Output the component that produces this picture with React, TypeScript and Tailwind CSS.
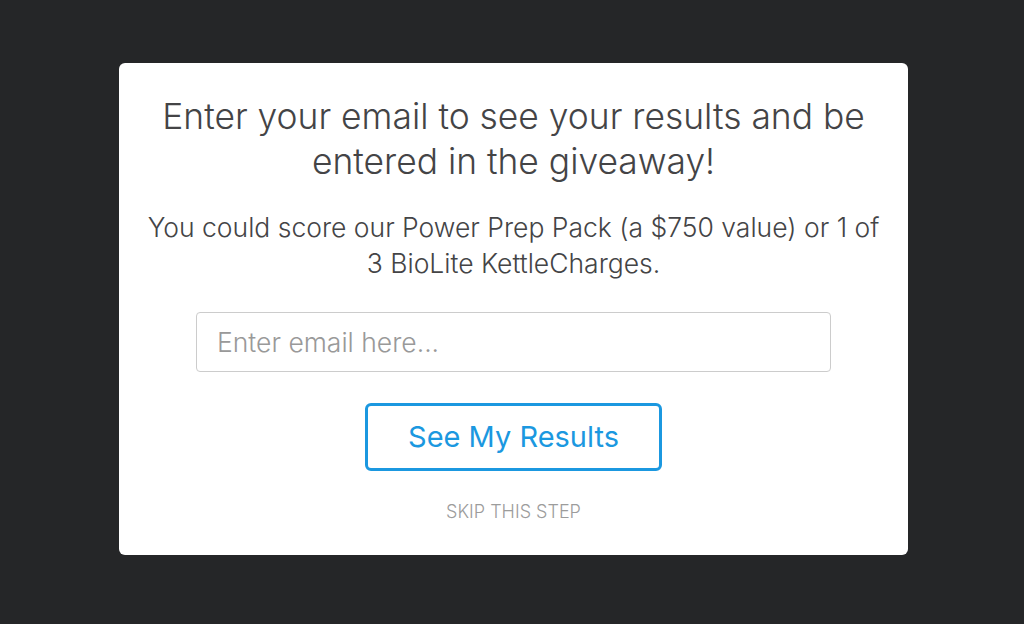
export default function App() {
  return (
    <div className="min-h-screen h-[624px] bg-[#252628] flex justify-center items-start pt-[63px] pl-[3px]">
      <div
        className="w-[789px] h-[492px] bg-white rounded-[6px] flex flex-col items-center pt-[31px]"
        style={{ fontFamily: "Inter, 'Open Sans', sans-serif" }}
      >
        <h1 className="text-[35.4px] leading-[45px] text-[#444446] text-center w-[740px] font-light">
          Enter your email to see your results and be entered in the giveaway!
        </h1>

        <p className="mt-[25px] text-[26.5px] leading-[36px] text-[#444446] text-center w-[745px] font-light">
          You could score our Power Prep Pack (a $750 value) or 1 of 3 BioLite KettleCharges.
        </p>

        <input
          type="email"
          placeholder="Enter email here..."
          className="mt-[31px] w-[635px] h-[60px] border border-[#cccccc] rounded-[4px] px-[20px] text-[26.5px] font-light text-[#444] placeholder:text-[#999999] outline-none"
        />

        <button className="mt-[31px] w-[297px] h-[68px] border-[3px] border-[#1b98e0] rounded-[6px] text-[29px] text-[#1b98e0] bg-white">
          See My Results
        </button>

        <a className="mt-[27px] text-[18px] uppercase text-[#9c9c9c] font-light cursor-pointer">
          Skip this step
        </a>
      </div>
    </div>
  );
}
